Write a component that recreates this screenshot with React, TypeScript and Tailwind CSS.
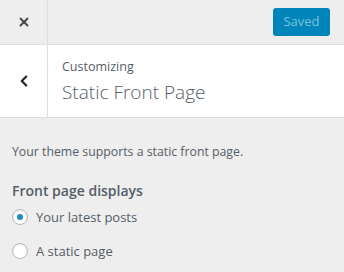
import { X, ChevronLeft } from 'lucide-react';

export default function App() {
  return (
    <div className="flex h-[272px] w-[344px] flex-col overflow-hidden bg-[#eeeeee] text-[#555d66]" style={{ fontFamily: '"Open Sans", "Noto Sans", sans-serif' }}>
      {/* header bar */}
      <div className="flex h-[45px] shrink-0 items-stretch border-b border-[#dddddd] bg-[#eeeeee]">
        <button type="button" className="flex w-[48px] items-center justify-center border-r border-[#dddddd] text-[#444444]">
          <X className="h-[14px] w-[14px]" strokeWidth={3.2} />
        </button>
        <div className="flex flex-1 items-center justify-end pr-[14px]">
          <button type="button" className="h-[28px] w-[57px] rounded-[3px] bg-[#0085ba] text-[13px] text-[#7fc2dc]">
            Saved
          </button>
        </div>
      </div>

      {/* section title */}
      <div className="flex h-[73px] shrink-0 items-stretch border-b border-[#dddddd] bg-white">
        <button type="button" className="flex w-[48px] items-center justify-center border-r border-[#dddddd] text-[#23282d]">
          <ChevronLeft className="h-[18px] w-[18px]" strokeWidth={3} />
        </button>
        <div className="flex flex-col justify-center pl-[14px]">
          <span className="text-[12.5px] leading-[18px] text-[#555d66]">Customizing</span>
          <span className="mt-[3px] text-[19px] font-light leading-[26px] text-[#555d66]">Static Front Page</span>
        </div>
      </div>

      {/* content */}
      <div className="flex flex-col px-[12px] pt-[25px]">
        <p className="text-[12.3px] leading-[18px]">Your theme supports a static front page.</p>
        <p className="mt-[20px] text-[14px] font-semibold leading-[20px]">Front page displays</p>
        <div className="mt-[6px] flex flex-col gap-[14px]">
          <label className="flex items-center gap-[8px] text-[13px] leading-[20px]">
            <span className="flex h-[16px] w-[16px] items-center justify-center rounded-full border border-[#b4b9be] bg-white shadow-[inset_0_1px_2px_rgba(0,0,0,0.1)]">
              <span className="h-[6px] w-[6px] rounded-full bg-[#1e8cbe]" />
            </span>
            Your latest posts
          </label>
          <label className="flex items-center gap-[8px] text-[13px] leading-[20px]">
            <span className="h-[16px] w-[16px] rounded-full border border-[#b4b9be] bg-white shadow-[inset_0_1px_2px_rgba(0,0,0,0.1)]" />
            A static page
          </label>
        </div>
      </div>
    </div>
  );
}
